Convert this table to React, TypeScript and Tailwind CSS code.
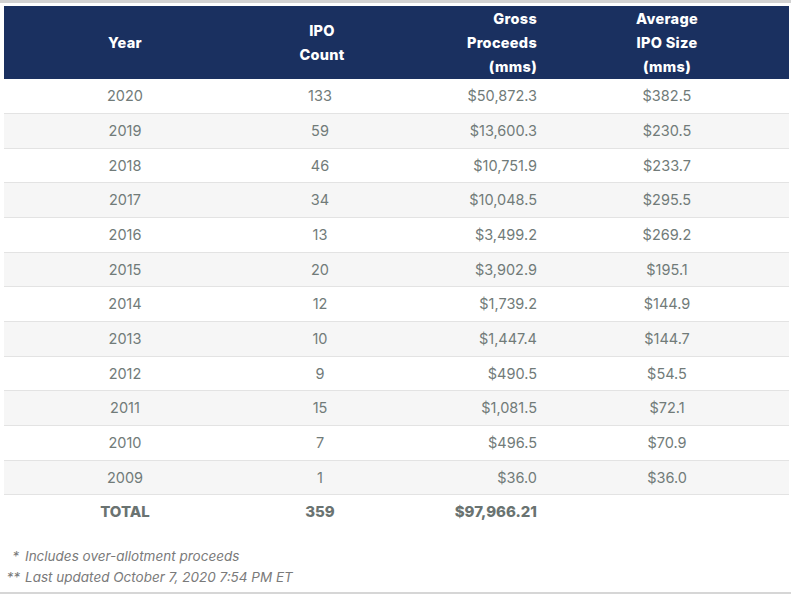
const rows: [string, string, string, string][] = [
  ["2020", "133", "$50,872.3", "$382.5"],
  ["2019", "59", "$13,600.3", "$230.5"],
  ["2018", "46", "$10,751.9", "$233.7"],
  ["2017", "34", "$10,048.5", "$295.5"],
  ["2016", "13", "$3,499.2", "$269.2"],
  ["2015", "20", "$3,902.9", "$195.1"],
  ["2014", "12", "$1,739.2", "$144.9"],
  ["2013", "10", "$1,447.4", "$144.7"],
  ["2012", "9", "$490.5", "$54.5"],
  ["2011", "15", "$1,081.5", "$72.1"],
  ["2010", "7", "$496.5", "$70.9"],
  ["2009", "1", "$36.0", "$36.0"],
];

export default function App() {
  return (
    <div className="w-[791px] h-[594px] bg-white overflow-hidden flex flex-col font-['Inter',sans-serif]">
      <div className="h-[3px] bg-[#d2d2d2] shrink-0" />
      <div className="pl-[4px] pr-[2px] pt-[3px]">
        <table className="w-[785px] border-collapse table-fixed text-[14.5px] text-[#717b79]">
          <colgroup>
            <col className="w-[242px]" />
            <col className="w-[144px]" />
            <col className="w-[155px]" />
            <col className="w-[244px]" />
          </colgroup>
          <thead>
            <tr className="bg-[#1a3060] text-white text-[14.5px] leading-6 h-[73px] tracking-[0.3px]">
              <th className="text-center font-extrabold pt-[1px]">Year</th>
              <th className="text-center font-extrabold pl-2 pt-[1px]">
                IPO
                <br />
                Count
              </th>
              <th className="text-right font-extrabold pr-[8px] pt-[1px]">
                Gross
                <br />
                Proceeds
                <br />
                (mms)
              </th>
              <th className="text-center font-extrabold pt-[1px]">
                Average
                <br />
                IPO Size
                <br />
                (mms)
              </th>
            </tr>
          </thead>
          <tbody>
            {rows.map((r, i) => (
              <tr
                key={r[0]}
                className={
                  (i % 2 === 1 ? "bg-[#f6f6f6] " : "bg-white ") +
                  "h-[34.67px] border-b border-[#e3e3e3]"
                }
              >
                <td className="text-center">{r[0]}</td>
                <td className="text-center pl-1">{r[1]}</td>
                <td className="text-right pr-[8px]">{r[2]}</td>
                <td className="text-center">{r[3]}</td>
              </tr>
            ))}
            <tr className="h-[35px] font-extrabold text-[15px] text-[#6a7371]">
              <td className="text-center">TOTAL</td>
              <td className="text-center pl-1">359</td>
              <td className="text-right pr-[8px]">$97,966.21</td>
              <td />
            </tr>
          </tbody>
        </table>
        <div className="mt-[16px] text-[13.5px] italic text-[#7a7a7a] leading-[21px]">
          <div className="flex">
            <span className="w-[21px] text-right pr-[6px]">*</span>
            <span>Includes over-allotment proceeds</span>
          </div>
          <div className="flex">
            <span className="w-[21px] text-right pr-[5px]">**</span>
            <span>Last updated October 7, 2020 7:54 PM ET</span>
          </div>
        </div>
      </div>
      <div className="flex-1" />
      <div className="h-[2px] bg-[#d6d6d6] shrink-0" />
    </div>
  );
}
